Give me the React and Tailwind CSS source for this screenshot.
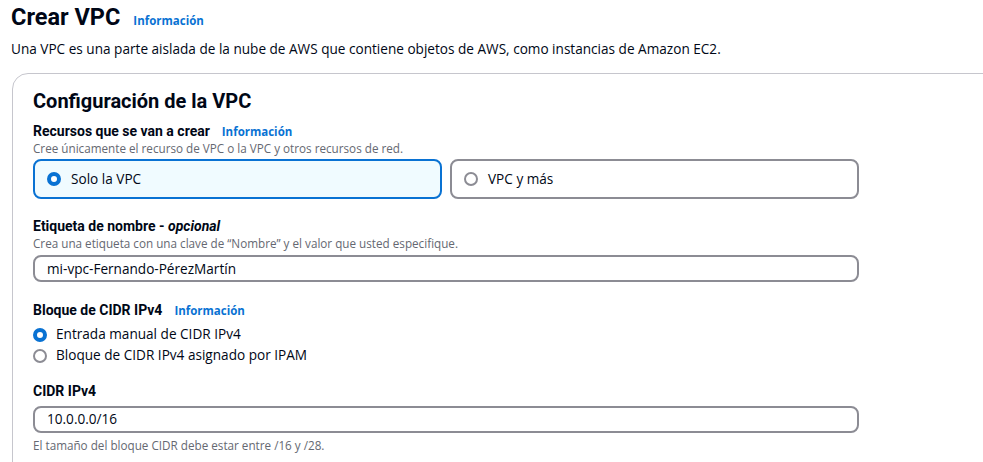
const Info = () => (
  <a href="#" className="text-[11.5px] font-bold text-[#0972d3]">Información</a>
)

const Dot = ({ checked }) =>
  checked ? (
    <span className="w-[14px] h-[14px] rounded-full border-[4px] border-[#0972d3] bg-white shrink-0" />
  ) : (
    <span className="w-[14px] h-[14px] rounded-full border-2 border-[#8c8c94] bg-white shrink-0" />
  )

const Label = ({ children }) => (
  <span className="font-['Roboto',sans-serif] text-[14px] leading-[18px] font-bold">{children}</span>
)

export default function App() {
  return (
    <div className="min-h-[462px] bg-white text-[#000716] overflow-hidden font-['Open_Sans',sans-serif]">
      <div className="pl-[11px]">
        <div className="flex items-baseline gap-[13px] h-[36px]">
          <h1 className="font-['Roboto',sans-serif] text-[23.5px] leading-[34px] font-bold">Crear VPC</h1>
          <Info />
        </div>
        <p className="text-[13.6px] leading-[20px] mt-[3px]">
          Una VPC es una parte aislada de la nube de AWS que contiene objetos de AWS, como instancias de Amazon EC2.
        </p>
      </div>

      <div className="ml-[12px] mt-[14px] w-[1000px] border border-[#c6c6cd] rounded-tl-[16px] pl-[20px] pt-[14px] pb-6">
        <h2 className="font-['Roboto',sans-serif] text-[20px] leading-[26px] font-bold">Configuración de la VPC</h2>

        <div className="mt-[8px] w-[826px]">
          <div className="flex items-baseline gap-[12px]">
            <Label>Recursos que se van a crear</Label>
            <Info />
          </div>
          <p className="text-[11.7px] leading-[16px] text-[#656871]">
            Cree únicamente el recurso de VPC o la VPC y otros recursos de red.
          </p>
          <div className="grid grid-cols-2 gap-[8px] mt-[3px]">
            <label className="flex items-center gap-[10px] h-[40px] px-[12px] rounded-[8px] border-2 border-[#0972d3] bg-[#f0fbff] text-[13.6px]">
              <Dot checked />
              Solo la VPC
            </label>
            <label className="flex items-center gap-[10px] h-[40px] px-[12px] rounded-[8px] border-2 border-[#8c8c94] bg-white text-[13.6px]">
              <Dot />
              VPC y más
            </label>
          </div>

          <div className="mt-[17px]">
            <div className="leading-[19px]">
              <Label>
                Etiqueta de nombre - <i>opcional</i>
              </Label>
            </div>
            <p className="text-[11.7px] leading-[16px] text-[#656871]">
              Crea una etiqueta con una clave de “Nombre” y el valor que usted especifique.
            </p>
            <div className="mt-[4px] h-[27px] flex items-center px-[12px] rounded-[8px] border-2 border-[#8c8c94] text-[13.6px]">
              mi-vpc-Fernando-PérezMartín
            </div>
          </div>

          <div className="mt-[19px]">
            <div className="flex items-baseline gap-[12px]">
              <Label>Bloque de CIDR IPv4</Label>
              <Info />
            </div>
            <div className="mt-[5px] flex flex-col gap-[1px] text-[13.6px]">
              <label className="flex items-center gap-[9px] h-[20px]">
                <Dot checked />
                Entrada manual de CIDR IPv4
              </label>
              <label className="flex items-center gap-[9px] h-[20px]">
                <Dot />
                Bloque de CIDR IPv4 asignado por IPAM
              </label>
            </div>
          </div>

          <div className="mt-[16px]">
            <div className="flex">
              <Label>CIDR IPv4</Label>
            </div>
            <div className="mt-[6px] h-[27px] flex items-center px-[12px] rounded-[8px] border-2 border-[#8c8c94] text-[13.6px]">
              10.0.0.0/16
            </div>
            <p className="mt-[4px] text-[11.7px] leading-[16px] text-[#656871]">
              El tamaño del bloque CIDR debe estar entre /16 y /28.
            </p>
          </div>
        </div>
      </div>
    </div>
  )
}
